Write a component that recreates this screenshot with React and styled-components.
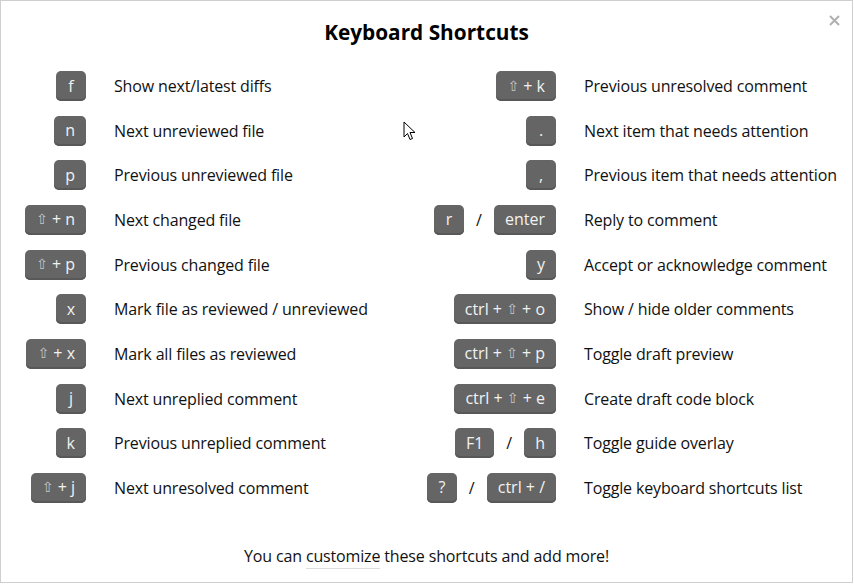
import React from 'react';
import styled, { createGlobalStyle } from 'styled-components';

const GlobalStyle = createGlobalStyle`
  html, body {
    margin: 0;
    padding: 0;
    background: #fff;
  }
  body {
    font-family: "Open Sans", "DejaVu Sans", sans-serif;
    color: #111;
  }
`;

const Dialog = styled.div`
  position: relative;
  box-sizing: border-box;
  width: 853px;
  height: 583px;
  border: 1px solid #cfcfcf;
  background: #fff;
  display: flex;
  flex-direction: column;
  align-items: stretch;
`;

const Title = styled.h1`
  margin: 17px 0 0;
  font-size: 20.8px;
  line-height: 28px;
  font-weight: 700;
  text-align: center;
  color: #000;
`;

const Close = styled.button`
  position: absolute;
  top: 11px;
  right: 10px;
  border: 0;
  background: transparent;
  padding: 0;
  width: 16px;
  height: 16px;
  color: #b0b0b0;
  cursor: pointer;
  display: flex;
  align-items: center;
  justify-content: center;
`;

const Grid = styled.div`
  margin-top: 25px;
  margin-left: -1px;
  display: grid;
  grid-template-columns: 86px 244px 170px 1fr;
  grid-auto-rows: 30px;
  column-gap: 28px;
  row-gap: 14.67px;
`;

const Keys = styled.div`
  display: flex;
  justify-content: flex-end;
  align-items: center;
  gap: 12px;
  white-space: nowrap;
`;

const Key = styled.kbd`
  box-sizing: border-box;
  display: inline-flex;
  align-items: center;
  justify-content: center;
  height: 30px;
  min-width: 30px;
  padding: 0 11px 1px;
  border-radius: 5px;
  background: #656565;
  box-shadow: inset 0 -2px 0 #585858;
  color: #f2f2f2;
  font-family: "Open Sans", "DejaVu Sans", sans-serif;
  font-size: 16px;
  white-space: pre;
`;

const Shift = styled.span`
  font-family: "DejaVu Sans", sans-serif;
  font-size: 14px;
  color: #c8c8c8;
`;

const Sep = styled.span`
  font-size: 16px;
  color: #111;
`;

const Desc = styled.div`
  display: flex;
  align-items: center;
  font-size: 16px;
  letter-spacing: -0.15px;
  white-space: nowrap;
  color: #111;
`;

const Footer = styled.p`
  margin: auto 0 15px;
  text-align: center;
  font-size: 16px;
  letter-spacing: -0.15px;
  color: #111;
`;

const Link = styled.a`
  color: inherit;
  text-decoration: none;
  border-bottom: 1px solid #dcdcdc;
  padding-bottom: 1px;
`;

const Pointer = styled.svg`
  position: absolute;
  left: 402px;
  top: 120px;
`;

const S = '\u21e7';

const left = [
  [['f'], 'Show next/latest diffs'],
  [['n'], 'Next unreviewed file'],
  [['p'], 'Previous unreviewed file'],
  [[[S, 'n']], 'Next changed file'],
  [[[S, 'p']], 'Previous changed file'],
  [['x'], 'Mark file as reviewed / unreviewed'],
  [[[S, 'x']], 'Mark all files as reviewed'],
  [['j'], 'Next unreplied comment'],
  [['k'], 'Previous unreplied comment'],
  [[[S, 'j']], 'Next unresolved comment'],
];

const right = [
  [[[S, 'k']], 'Previous unresolved comment'],
  [['.'], 'Next item that needs attention'],
  [[','], 'Previous item that needs attention'],
  [['r', 'enter'], 'Reply to comment'],
  [['y'], 'Accept or acknowledge comment'],
  [[['ctrl', S, 'o']], 'Show / hide older comments'],
  [[['ctrl', S, 'p']], 'Toggle draft preview'],
  [[['ctrl', S, 'e']], 'Create draft code block'],
  [['F1', 'h'], 'Toggle guide overlay'],
  [['?', 'ctrl + /'], 'Toggle keyboard shortcuts list'],
];

function KeyCap({ value }) {
  if (!Array.isArray(value)) return <Key>{value}</Key>;
  return (
    <Key>
      {value.map((part, i) => (
        <React.Fragment key={i}>
          {i > 0 && ' + '}
          {part === S ? <Shift>{S}</Shift> : part}
        </React.Fragment>
      ))}
    </Key>
  );
}

function KeyGroup({ keys }) {
  return (
    <Keys>
      {keys.map((k, i) => (
        <React.Fragment key={i}>
          {i > 0 && <Sep>/</Sep>}
          <KeyCap value={k} />
        </React.Fragment>
      ))}
    </Keys>
  );
}

export default function App() {
  return (
    <>
      <GlobalStyle />
      <Dialog>
        <Title>Keyboard Shortcuts</Title>
        <Close aria-label="Close">
          <svg width="11" height="11" viewBox="0 0 11 11">
            <path d="M1 1 L10 10 M10 1 L1 10" stroke="currentColor" strokeWidth="2" />
          </svg>
        </Close>
        <Grid>
          {left.map(([keys, text], i) => (
            <React.Fragment key={i}>
              <KeyGroup keys={keys} />
              <Desc>{text}</Desc>
              <KeyGroup keys={right[i][0]} />
              <Desc>{right[i][1]}</Desc>
            </React.Fragment>
          ))}
        </Grid>
        <Footer>
          You can <Link href="#">customize</Link> these shortcuts and add more!
        </Footer>
        <Pointer width="14" height="20" viewBox="0 0 14 20">
          <path
            d="M1 1 L1 16 L4.5 12.5 L7 18.5 L9.5 17.5 L7 11.5 L12 11.5 Z"
            fill="#fff"
            stroke="#000"
            strokeWidth="1"
            strokeLinejoin="round"
          />
        </Pointer>
      </Dialog>
    </>
  );
}
